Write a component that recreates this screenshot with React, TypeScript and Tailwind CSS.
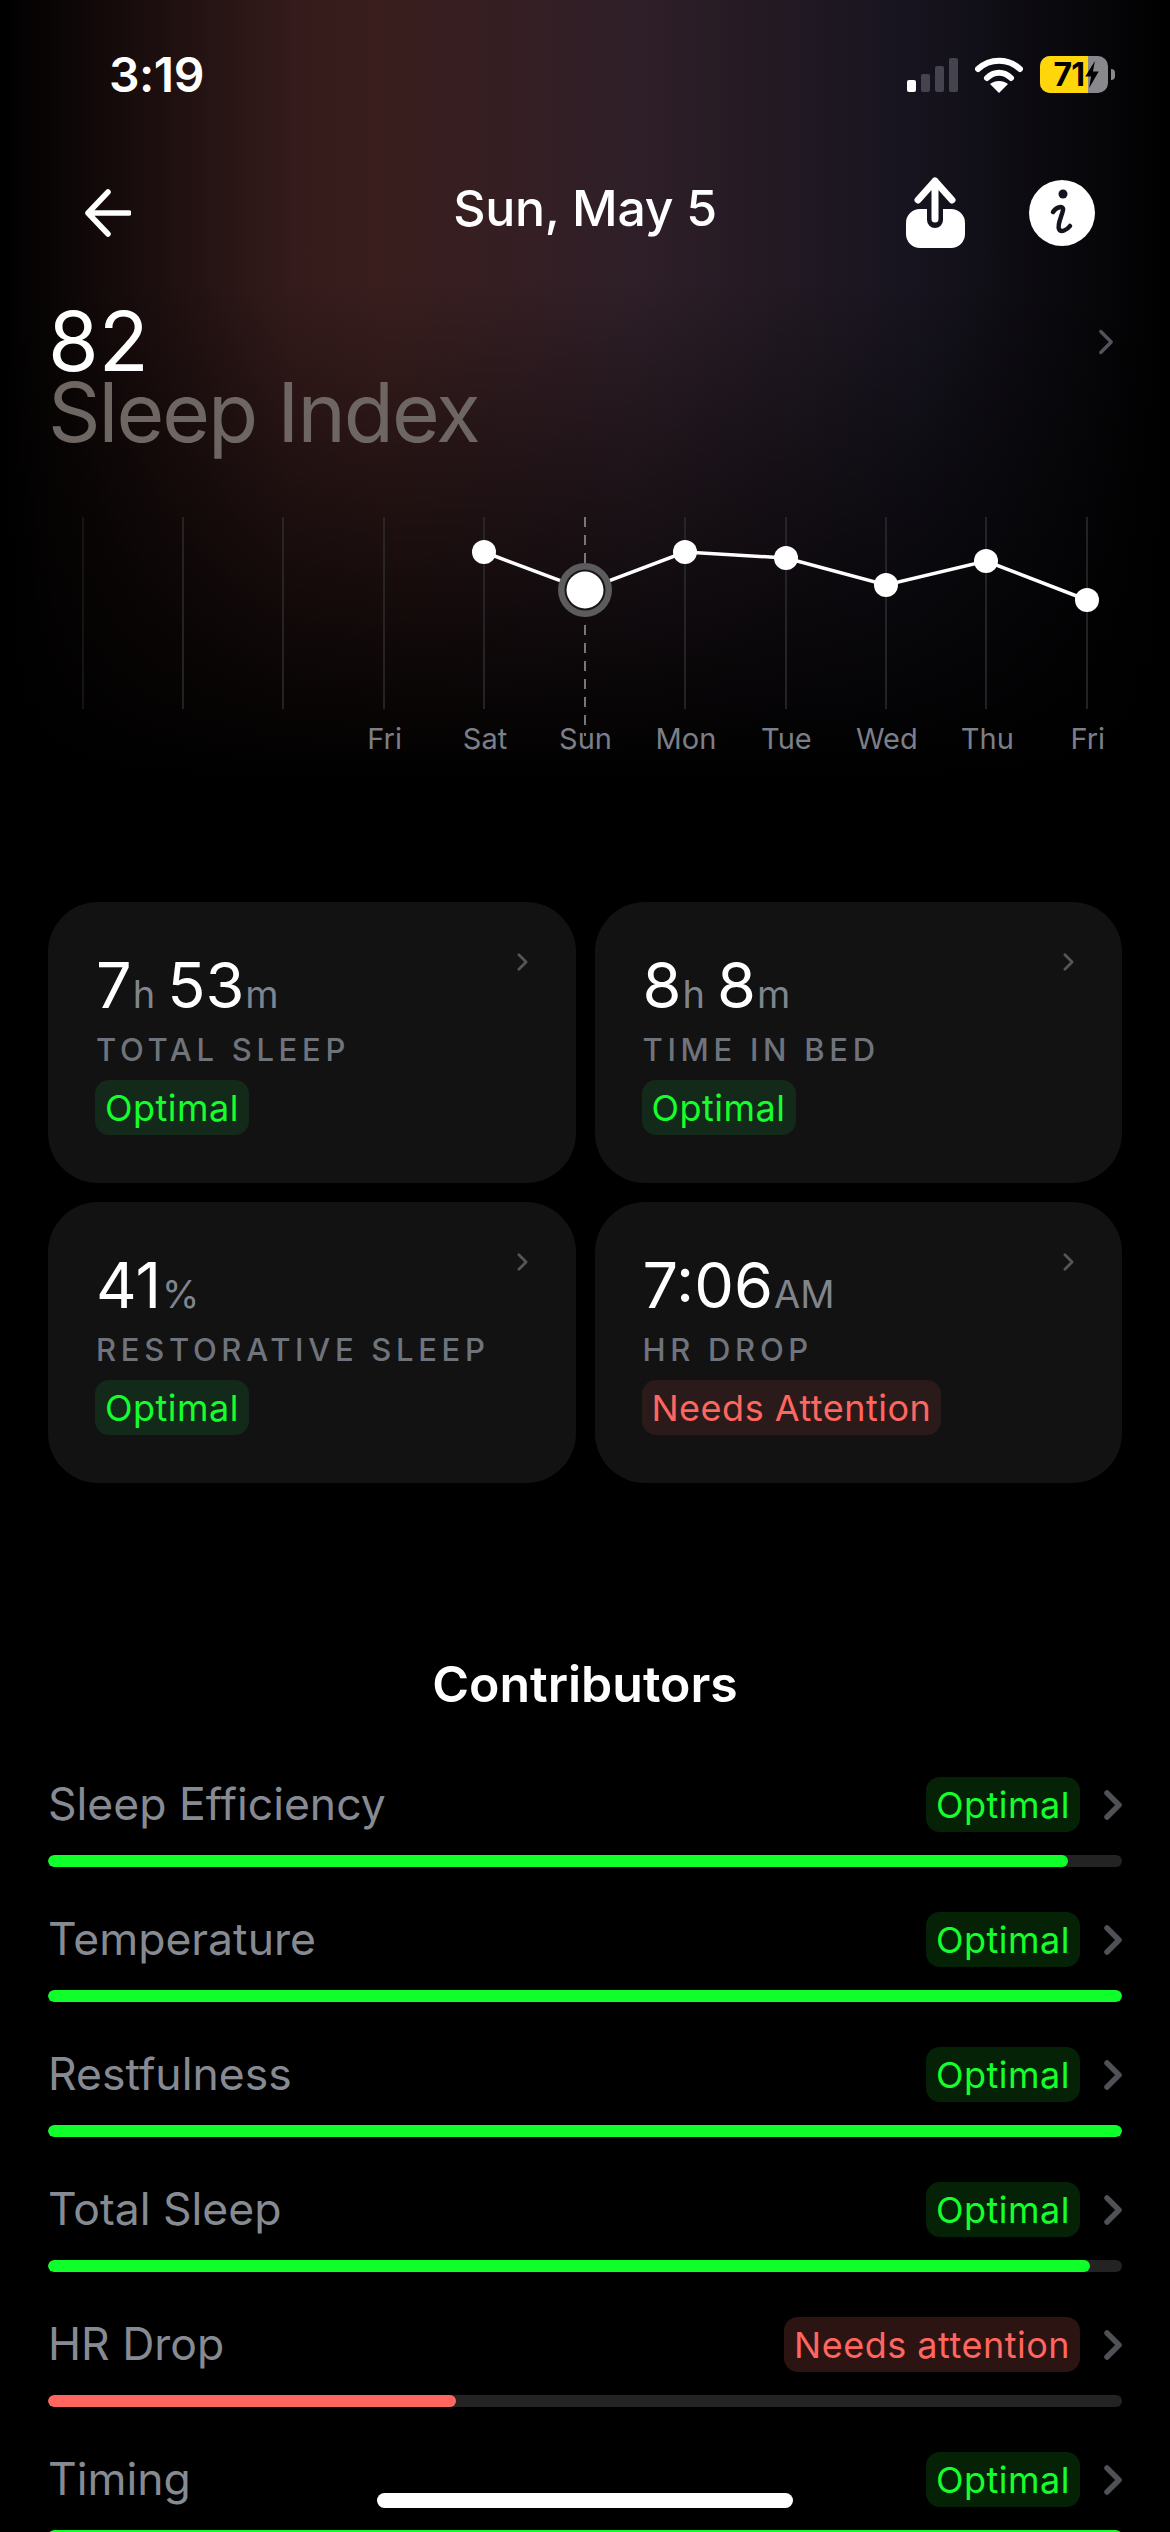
const points = [
  { x: 484, y: 552 },
  { x: 585, y: 590 },
  { x: 685, y: 552 },
  { x: 786, y: 558 },
  { x: 886, y: 585 },
  { x: 986, y: 561 },
  { x: 1087, y: 600 },
];
const gridLines = [83, 183, 283, 384, 484, 685, 786, 886, 986, 1087];
const dayLabels = ['', '', '', 'Fri', 'Sat', 'Sun', 'Mon', 'Tue', 'Wed', 'Thu', 'Fri'];

const cards = [
  { parts: [['7', 'h'], ['53', 'm']], label: 'TOTAL SLEEP', status: 'Optimal', bad: false },
  { parts: [['8', 'h'], ['8', 'm']], label: 'TIME IN BED', status: 'Optimal', bad: false },
  { parts: [['41', '%']], label: 'RESTORATIVE SLEEP', status: 'Optimal', bad: false },
  { parts: [['7:06', 'AM']], label: 'HR DROP', status: 'Needs Attention', bad: true },
];

const contributors = [
  { name: 'Sleep Efficiency', status: 'Optimal', pct: 95, bad: false },
  { name: 'Temperature', status: 'Optimal', pct: 100, bad: false },
  { name: 'Restfulness', status: 'Optimal', pct: 100, bad: false },
  { name: 'Total Sleep', status: 'Optimal', pct: 97, bad: false },
  { name: 'HR Drop', status: 'Needs attention', pct: 38, bad: true },
  { name: 'Timing', status: 'Optimal', pct: 100, bad: false },
];

function Chevron({ className, stroke, width }: { className: string; stroke: string; width: number }) {
  return (
    <svg viewBox="0 0 18 30" fill="none" className={className}>
      <path d="M3 3L15 15L3 27" stroke={stroke} strokeWidth={width} strokeLinecap="round" strokeLinejoin="round" />
    </svg>
  );
}

function StatusBar() {
  return (
    <div className="mt-[52px] flex h-[45px] items-center justify-between pl-[109px] pr-[55px]">
      <span className="text-[48px] font-semibold leading-none tracking-[-0.5px] text-white">3:19</span>
      <div className="flex items-center">
        <div className="flex h-[34px] items-end gap-[5px]">
          <div className="h-[12px] w-[9px] rounded-[2px] bg-white" />
          <div className="h-[18px] w-[9px] rounded-[2px] bg-[#45444e]" />
          <div className="h-[26px] w-[9px] rounded-[2px] bg-[#45444e]" />
          <div className="h-[34px] w-[9px] rounded-[2px] bg-[#45444e]" />
        </div>
        <svg viewBox="0 0 48 36" className="ml-[17px] h-[36px] w-[48px]" fill="none">
          <path d="M3 12C15 1 33 1 45 12" stroke="#fff" strokeWidth="6" strokeLinecap="round" />
          <path d="M12 21C19 14 29 14 36 21" stroke="#fff" strokeWidth="6" strokeLinecap="round" />
          <path d="M24 36L15 27C20 23 28 23 33 27Z" fill="#fff" />
        </svg>
        <div className="relative ml-[17px] flex h-[37px] w-[68px] overflow-hidden rounded-[10px] bg-[#89898d]">
          <div className="flex h-full w-[48px] items-center justify-end bg-[#ffd60a] pr-[4px]">
            <span className="text-[32px] font-bold leading-none tracking-[-1px] text-black">71</span>
          </div>
          <svg viewBox="0 0 16 28" className="absolute left-[44px] top-[5px] h-[27px] w-[16px]">
            <path d="M11 0L1 16H7L5 28L15 11H9Z" fill="#000" />
          </svg>
        </div>
        <div className="ml-[3px] h-[11px] w-[4px] rounded-r-full bg-[#89898d]" />
      </div>
    </div>
  );
}

function NavBar() {
  return (
    <div className="mt-[80px] grid h-[72px] grid-cols-3 items-center pl-[85px] pr-[75px]">
      <svg viewBox="0 0 46 48" className="h-[48px] w-[46px]" fill="none">
        <path d="M23 3L3 24L23 45M3 24H44" stroke="#fff" strokeWidth="5.5" strokeLinecap="round" strokeLinejoin="round" />
      </svg>
      <h1 className="-ml-[10px] whitespace-nowrap pb-[10px] text-center text-[50px] font-medium leading-none tracking-[-0.3px] text-white">
        Sun, May 5
      </h1>
      <div className="flex items-center justify-end gap-[63px]">
        <svg viewBox="0 0 60 72" className="h-[72px] w-[60px]" fill="none">
          <path
            d="M14 32H21V43A8 8 0 0 0 37 43V32H45A14 14 0 0 1 59 46V57A14 14 0 0 1 45 71H14A14 14 0 0 1 0 57V46A14 14 0 0 1 14 32Z"
            fill="#fff"
          />
          <path d="M29 42V4M12 23L29 4L46 23" stroke="#fff" strokeWidth="7" strokeLinecap="round" strokeLinejoin="round" />
        </svg>
        <svg viewBox="0 0 66 66" className="h-[66px] w-[66px]" fill="none">
          <circle cx="33" cy="33" r="33" fill="#fff" />
          <circle cx="34" cy="14" r="4.5" fill="#15131e" />
          <path d="M24 32C27 27 35 25 34 30C33 36 28 44 30 49C32 53 38 50 41 46" stroke="#15131e" strokeWidth="4.5" strokeLinecap="round" />
        </svg>
      </div>
    </div>
  );
}

function SleepChart() {
  const line = points.map((p) => `${p.x},${p.y - 510}`).join(' ');
  return (
    <div className="mt-[56px]">
      <svg viewBox="0 0 1170 214" className="h-[214px] w-[1170px] overflow-visible" fill="none">
        {gridLines.map((x, i) => (
          <line key={x} x1={x} x2={x} y1="7" y2="199" stroke={i === 0 ? '#1c1a1c' : '#2e2c30'} strokeWidth="1.5" />
        ))}
        <line x1="585" x2="585" y1="7" y2="226" stroke="#77767a" strokeWidth="2" strokeDasharray="10 8" />
        <polyline points={line} stroke="#fff" strokeWidth="3.5" />
        {points.map((p) =>
          p.x === 585 ? (
            <g key={p.x}>
              <circle cx={p.x} cy={p.y - 510} r="27" fill="#5c5b5d" />
              <circle cx={p.x} cy={p.y - 510} r="20.5" fill="#1a1618" />
              <circle cx={p.x} cy={p.y - 510} r="18.5" fill="#fff" />
            </g>
          ) : (
            <circle key={p.x} cx={p.x} cy={p.y - 510} r="12" fill="#fff" />
          ),
        )}
      </svg>
      <div className="ml-[33px] grid w-[1105px] grid-cols-11">
        {dayLabels.map((day, i) => (
          <span key={i} className="h-[30px] text-center text-[29px] leading-none text-[#7b7f87]">
            {day}
          </span>
        ))}
      </div>
    </div>
  );
}

function Badge({ text, bad, inCard }: { text: string; bad: boolean; inCard: boolean }) {
  const bg = bad
    ? inCard
      ? 'bg-[#2a1a1a] text-[#ff6660]'
      : 'bg-[#2b1412] text-[#ff6660]'
    : inCard
      ? 'bg-[#13291a] text-[#14ff2c]'
      : 'bg-[#062206] text-[#14ff2c]';
  return (
    <span className={`inline-flex h-[55px] items-center rounded-[14px] px-[10px] text-[36px] leading-none tracking-[0.5px] ${bg}`}>
      {text}
    </span>
  );
}

function MetricCard({ card }: { card: (typeof cards)[number] }) {
  return (
    <div className="relative h-[281px] rounded-[50px] bg-[#121212] pl-[48px] pt-[52px]">
      <Chevron className="absolute right-[48px] top-[51px] h-[18px] w-[11px]" stroke="#565656" width={4.5} />
      <div className="flex h-[63px] items-baseline gap-[12px] leading-none">
        {card.parts.map(([value, unit]) => (
          <span key={value + unit}>
            <span className="text-[63px] text-white">{value}</span>
            <span className="ml-[1px] text-[38px] text-[#80858d]">{unit}</span>
          </span>
        ))}
      </div>
      <div className="mt-[17px] text-[31px] font-medium leading-none tracking-[4.7px] text-[#6f747c]">{card.label}</div>
      <div className="mt-[15px] -ml-[1px]">
        <Badge text={card.status} bad={card.bad} inCard />
      </div>
    </div>
  );
}

function ContributorRow({ item }: { item: (typeof contributors)[number] }) {
  return (
    <div className="mb-[45px]">
      <div className="flex h-[55px] items-center">
        <span className="flex-1 text-[44.5px] leading-none text-[#868b93]">{item.name}</span>
        <Badge text={item.status} bad={item.bad} inCard={false} />
        <Chevron className="ml-[24px] h-[30px] w-[18px]" stroke="#4f5157" width={5.5} />
      </div>
      <div className="mt-[23px] h-[12px] overflow-hidden rounded-full bg-[#232323]">
        <div
          className={`h-full rounded-full ${item.bad ? 'bg-[#ff6660]' : 'bg-[#0eff29]'}`}
          style={{ width: `${item.pct}%` }}
        />
      </div>
    </div>
  );
}

export default function App() {
  return (
    <div className="relative h-[2532px] w-[1170px] overflow-hidden bg-black font-['Inter',sans-serif]">
      <div className="absolute inset-x-0 top-0 h-[800px] bg-[linear-gradient(to_bottom,transparent_35%,#000_98%),linear-gradient(to_right,#000_0%,#1a0d0d_12%,#351b1b_25%,#3a1e1e_33%,#2f1f28_54%,#17141f_78%,#000_100%)]" />
      <div className="relative">
        <StatusBar />
        <NavBar />
        <div className="mt-[52px] flex justify-between pl-[48px] pr-[56px]">
          <div>
            <div className="h-[71px] text-[82px] leading-none text-white">82</div>
            <div className="text-[82px] leading-none tracking-[-2px] text-[#6e6663]">Sleep Index</div>
          </div>
          <Chevron className="mt-[28px] h-[26px] w-[16px]" stroke="#52535b" width={4} />
        </div>
        <SleepChart />
        <div className="mx-[48px] mt-[148px] grid grid-cols-2 gap-[19px]">
          {cards.map((card) => (
            <MetricCard key={card.label} card={card} />
          ))}
        </div>
        <h2 className="mt-[176px] text-center text-[50px] font-semibold leading-none text-white">Contributors</h2>
        <div className="mx-[48px] mt-[68px]">
          {contributors.map((item) => (
            <ContributorRow key={item.name} item={item} />
          ))}
        </div>
      </div>
      <div className="absolute bottom-[24px] left-[377px] h-[15px] w-[416px] rounded-full bg-white" />
    </div>
  );
}
